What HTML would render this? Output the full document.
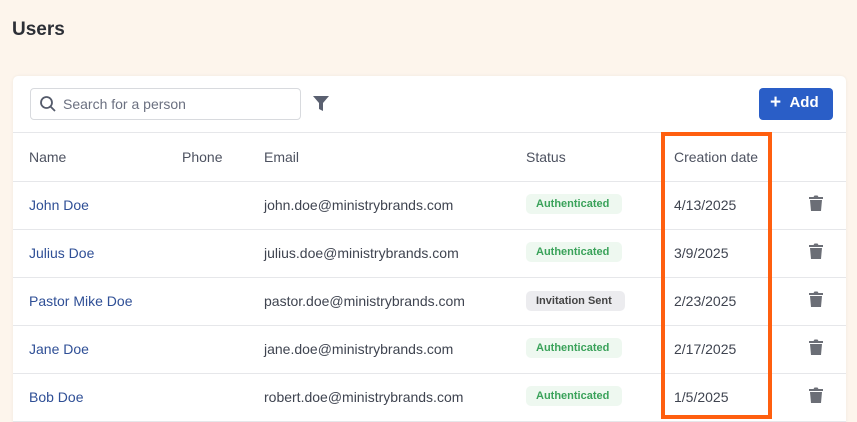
<!DOCTYPE html>
<html><head><style>
*{box-sizing:border-box;margin:0;padding:0}
html,body{width:857px;height:422px;overflow:hidden}
body{background:#fdf5ec;font-family:"Liberation Sans",sans-serif;position:relative;color:#3f4450}
h1{position:absolute;left:12px;top:19px;font-size:19px;font-weight:bold;color:#2c2f36}
.card{position:absolute;left:13px;top:76px;width:833px;height:360px;background:#fff;border-radius:5px;box-shadow:0 0 3px rgba(0,0,0,.06)}
.search{position:absolute;left:17px;top:12px;width:271px;height:32px;border:1px solid #d8dade;border-radius:4px;font-size:14px;color:#6b7080;padding:7px 0 0 32px}
.search svg{position:absolute;left:8px;top:6px}
.filter{position:absolute;left:300px;top:20px}
.add{position:absolute;left:746px;top:12px;width:74px;height:32px;background:#2a5ec7;border-radius:4px;color:#fff;font-weight:bold;font-size:15px;padding:6px 0 0 11px}
.add b{font-size:19px;line-height:18px;vertical-align:-1px}
.line{position:absolute;left:0;width:833px;height:1px;background:#e6e7ea}
.t{position:absolute;font-size:14px;white-space:nowrap}
.h{color:#4d5260}
.n{color:#2f4f96}
.b{position:absolute;left:513px;height:20px;border-radius:5px;font-size:11px;font-weight:bold;padding:4px 0 0 10px}
.ok{background:#eef8f0;color:#3aa25a;width:96px}
.inv{background:#ececef;color:#444;width:99px;padding-left:10px}
.trash{position:absolute;left:796px}
.box{position:absolute;left:661px;top:132px;width:111px;height:287px;border:4px solid #ff5f0f}
</style></head><body>
<h1>Users</h1>
<div class="card">
<div class="search"><svg width="18" height="18" viewBox="0 0 18 18"><circle cx="7.5" cy="7.5" r="5.5" fill="none" stroke="#555b6b" stroke-width="1.8"/><path d="M11.5 11.5L16 16" stroke="#555b6b" stroke-width="1.8"/></svg>Search for a person</div>
<svg class="filter" width="16" height="16" viewBox="0 0 16 16"><path d="M0 0H16L10 7V15L6 13V7Z" fill="#5a6070"/></svg>
<div class="add"><b>+</b>&nbsp;&nbsp;Add</div>
<div class="line" style="top:56px"></div>
<div class="t h" style="left:16px;top:73px">Name</div>
<div class="t h" style="left:169px;top:73px">Phone</div>
<div class="t h" style="left:251px;top:73px">Email</div>
<div class="t h" style="left:513px;top:73px">Status</div>
<div class="t h" style="left:661px;top:73px">Creation date</div>
<div class="line" style="top:105px"></div>
<div class="t n" style="left:16px;top:121px">John Doe</div><div class="t" style="left:251px;top:121px">john.doe@ministrybrands.com</div><div class="b ok" style="top:118px">Authenticated</div><div class="t" style="left:661px;top:121px">4/13/2025</div>
<div class="line" style="top:153px"></div>
<div class="t n" style="left:16px;top:169px">Julius Doe</div><div class="t" style="left:251px;top:169px">julius.doe@ministrybrands.com</div><div class="b ok" style="top:166px">Authenticated</div><div class="t" style="left:661px;top:169px">3/9/2025</div>
<div class="line" style="top:201px"></div>
<div class="t n" style="left:16px;top:217px">Pastor Mike Doe</div><div class="t" style="left:251px;top:217px">pastor.doe@ministrybrands.com</div><div class="b inv" style="top:215px">Invitation Sent</div><div class="t" style="left:661px;top:217px">2/23/2025</div>
<div class="line" style="top:249px"></div>
<div class="t n" style="left:16px;top:265px">Jane Doe</div><div class="t" style="left:251px;top:265px">jane.doe@ministrybrands.com</div><div class="b ok" style="top:262px">Authenticated</div><div class="t" style="left:661px;top:265px">2/17/2025</div>
<div class="line" style="top:297px"></div>
<div class="t n" style="left:16px;top:313px">Bob Doe</div><div class="t" style="left:251px;top:313px">robert.doe@ministrybrands.com</div><div class="b ok" style="top:310px">Authenticated</div><div class="t" style="left:661px;top:313px">1/5/2025</div>
<div class="line" style="top:345px"></div>
<svg class="trash" style="top:119px" width="14" height="16" viewBox="0 0 14 16"><path d="M0 2H4.5L5.5 0.5H8.5L9.5 2H14V4H0Z M1 5H13L12 16H2Z" fill="#6b6e76"/></svg>
<svg class="trash" style="top:167px" width="14" height="16" viewBox="0 0 14 16"><path d="M0 2H4.5L5.5 0.5H8.5L9.5 2H14V4H0Z M1 5H13L12 16H2Z" fill="#6b6e76"/></svg>
<svg class="trash" style="top:215px" width="14" height="16" viewBox="0 0 14 16"><path d="M0 2H4.5L5.5 0.5H8.5L9.5 2H14V4H0Z M1 5H13L12 16H2Z" fill="#6b6e76"/></svg>
<svg class="trash" style="top:263px" width="14" height="16" viewBox="0 0 14 16"><path d="M0 2H4.5L5.5 0.5H8.5L9.5 2H14V4H0Z M1 5H13L12 16H2Z" fill="#6b6e76"/></svg>
<svg class="trash" style="top:311px" width="14" height="16" viewBox="0 0 14 16"><path d="M0 2H4.5L5.5 0.5H8.5L9.5 2H14V4H0Z M1 5H13L12 16H2Z" fill="#6b6e76"/></svg>
</div>
<div class="box"></div>
</body></html>
